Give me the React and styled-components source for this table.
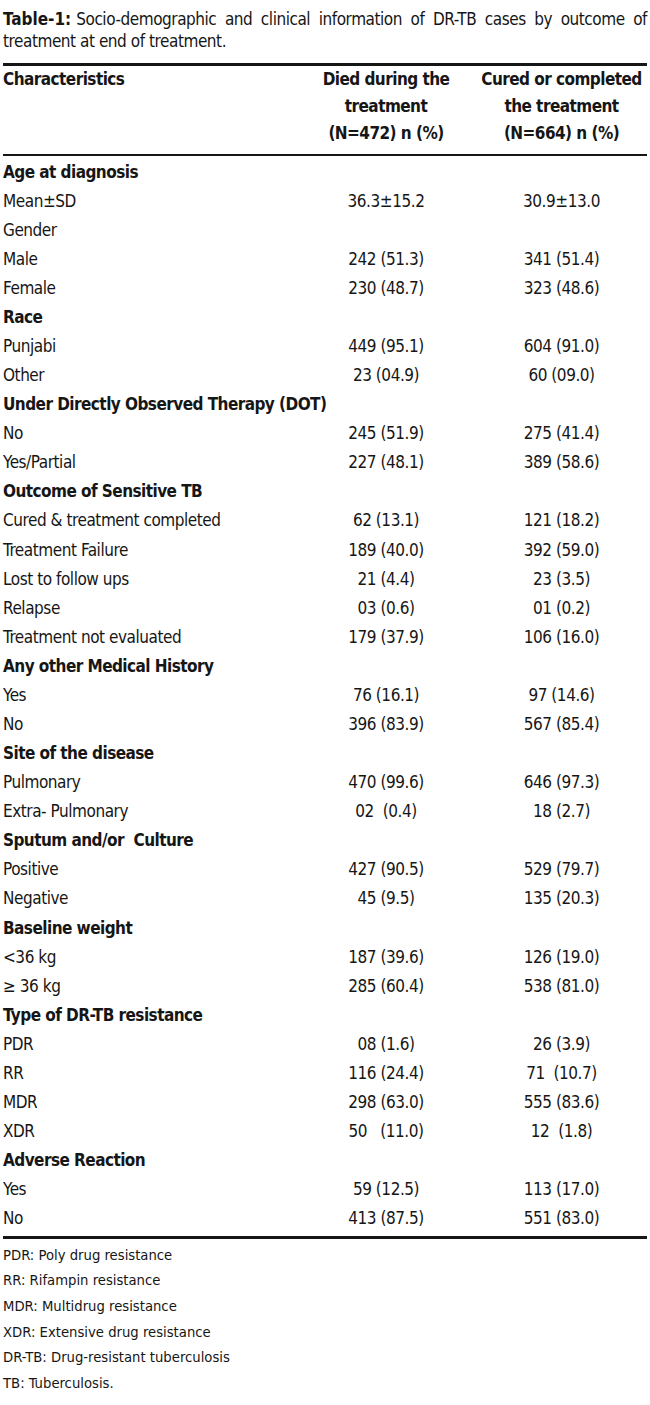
import React from 'react'
import styled, { createGlobalStyle } from 'styled-components'

const GlobalStyle = createGlobalStyle`
  html, body {
    margin: 0;
    padding: 0;
    background: #fff;
  }
  body {
    font-family: 'DejaVu Sans Condensed', 'DejaVu Sans', sans-serif;
    font-stretch: condensed;
    color: #161616;
  }
`

const Page = styled.div`
  width: 650px;
  box-sizing: border-box;
  padding: 8px 3px 0 3px;
`

const Caption = styled.div`
  font-size: 17px;
  letter-spacing: -0.45px;
  line-height: 22px;
`

const CaptionLine = styled.div`
  text-align: ${props => (props.justify ? 'justify' : 'left')};
  text-align-last: ${props => (props.justify ? 'justify' : 'auto')};
`

const CaptionLabel = styled.span`
  font-weight: 700;
  letter-spacing: 0;
  margin-right: 5px;
`

const Table = styled.div`
  margin-top: 11px;
  border-top: 3px solid #161616;
  border-bottom: 3px solid #161616;
  padding-bottom: 3px;
`

const HeaderRow = styled.div`
  display: grid;
  grid-template-columns: 293px 180px 1fr;
  padding: 0 0 7px;
  border-bottom: 2px solid #161616;
  margin-bottom: 1px;
  font-weight: 700;
  font-size: 17px;
  letter-spacing: -0.55px;
  line-height: 27px;
`

const HeadCell = styled.div`
  text-align: ${props => (props.center ? 'center' : 'left')};
`

const Row = styled.div`
  display: grid;
  grid-template-columns: 293px 180px 1fr;
  height: 29.08px;
  align-items: center;
  font-size: 17px;
  letter-spacing: ${props => (props.group ? '-0.55px' : '-0.45px')};
  font-weight: ${props => (props.group ? 700 : 400)};
`

const Cell = styled.div`
  white-space: pre;
  text-align: ${props => (props.center ? 'center' : 'left')};
`

const Notes = styled.div`
  padding-top: 3px;
  font-size: 14.7px;
  line-height: 25.6px;
`

const rows = [
  ['Age at diagnosis'],
  ['Mean\u00b1SD', '36.3\u00b115.2', '30.9\u00b113.0'],
  ['Gender', '', ''],
  ['Male', '242 (51.3)', '341 (51.4)'],
  ['Female', '230 (48.7)', '323 (48.6)'],
  ['Race'],
  ['Punjabi', '449 (95.1)', '604 (91.0)'],
  ['Other', '23 (04.9)', '60 (09.0)'],
  ['Under Directly Observed Therapy (DOT)'],
  ['No', '245 (51.9)', '275 (41.4)'],
  ['Yes/Partial', '227 (48.1)', '389 (58.6)'],
  ['Outcome of Sensitive TB'],
  ['Cured & treatment completed', '62 (13.1)', '121 (18.2)'],
  ['Treatment Failure', '189 (40.0)', '392 (59.0)'],
  ['Lost to follow ups', '21 (4.4)', '23 (3.5)'],
  ['Relapse', '03 (0.6)', '01 (0.2)'],
  ['Treatment not evaluated', '179 (37.9)', '106 (16.0)'],
  ['Any other Medical History'],
  ['Yes', '76 (16.1)', '97 (14.6)'],
  ['No', '396 (83.9)', '567 (85.4)'],
  ['Site of the disease'],
  ['Pulmonary', '470 (99.6)', '646 (97.3)'],
  ['Extra- Pulmonary', '02  (0.4)', '18 (2.7)'],
  ['Sputum and/or  Culture'],
  ['Positive', '427 (90.5)', '529 (79.7)'],
  ['Negative', '45 (9.5)', '135 (20.3)'],
  ['Baseline weight'],
  ['<36 kg', '187 (39.6)', '126 (19.0)'],
  ['\u2265 36 kg', '285 (60.4)', '538 (81.0)'],
  ['Type of DR-TB resistance'],
  ['PDR', '08 (1.6)', '26 (3.9)'],
  ['RR', '116 (24.4)', '71  (10.7)'],
  ['MDR', '298 (63.0)', '555 (83.6)'],
  ['XDR', '50   (11.0)', '12  (1.8)'],
  ['Adverse Reaction'],
  ['Yes', '59 (12.5)', '113 (17.0)'],
  ['No', '413 (87.5)', '551 (83.0)'],
]

const notes = [
  'PDR: Poly drug resistance',
  'RR: Rifampin resistance',
  'MDR: Multidrug resistance',
  'XDR: Extensive drug resistance',
  'DR-TB: Drug-resistant tuberculosis',
  'TB: Tuberculosis.',
]

export default function App() {
  return (
    <Page>
      <GlobalStyle />
      <Caption>
        <CaptionLine justify>
          <CaptionLabel>Table-1:</CaptionLabel>Socio-demographic and clinical information of
          DR-TB cases by outcome of
        </CaptionLine>
        <CaptionLine>treatment at end of treatment.</CaptionLine>
      </Caption>
      <Table>
        <HeaderRow>
          <HeadCell>Characteristics</HeadCell>
          <HeadCell center>
            Died during the
            <br />
            treatment
            <br />
            (N=472) n (%)
          </HeadCell>
          <HeadCell center>
            Cured or completed
            <br />
            the treatment
            <br />
            (N=664) n (%)
          </HeadCell>
        </HeaderRow>
        {rows.map((r, i) => (
          <Row key={i} group={r.length === 1}>
            <Cell>{r[0]}</Cell>
            <Cell center>{r[1] || ''}</Cell>
            <Cell center>{r[2] || ''}</Cell>
          </Row>
        ))}
      </Table>
      <Notes>
        {notes.map(n => (
          <div key={n}>{n}</div>
        ))}
      </Notes>
    </Page>
  )
}
